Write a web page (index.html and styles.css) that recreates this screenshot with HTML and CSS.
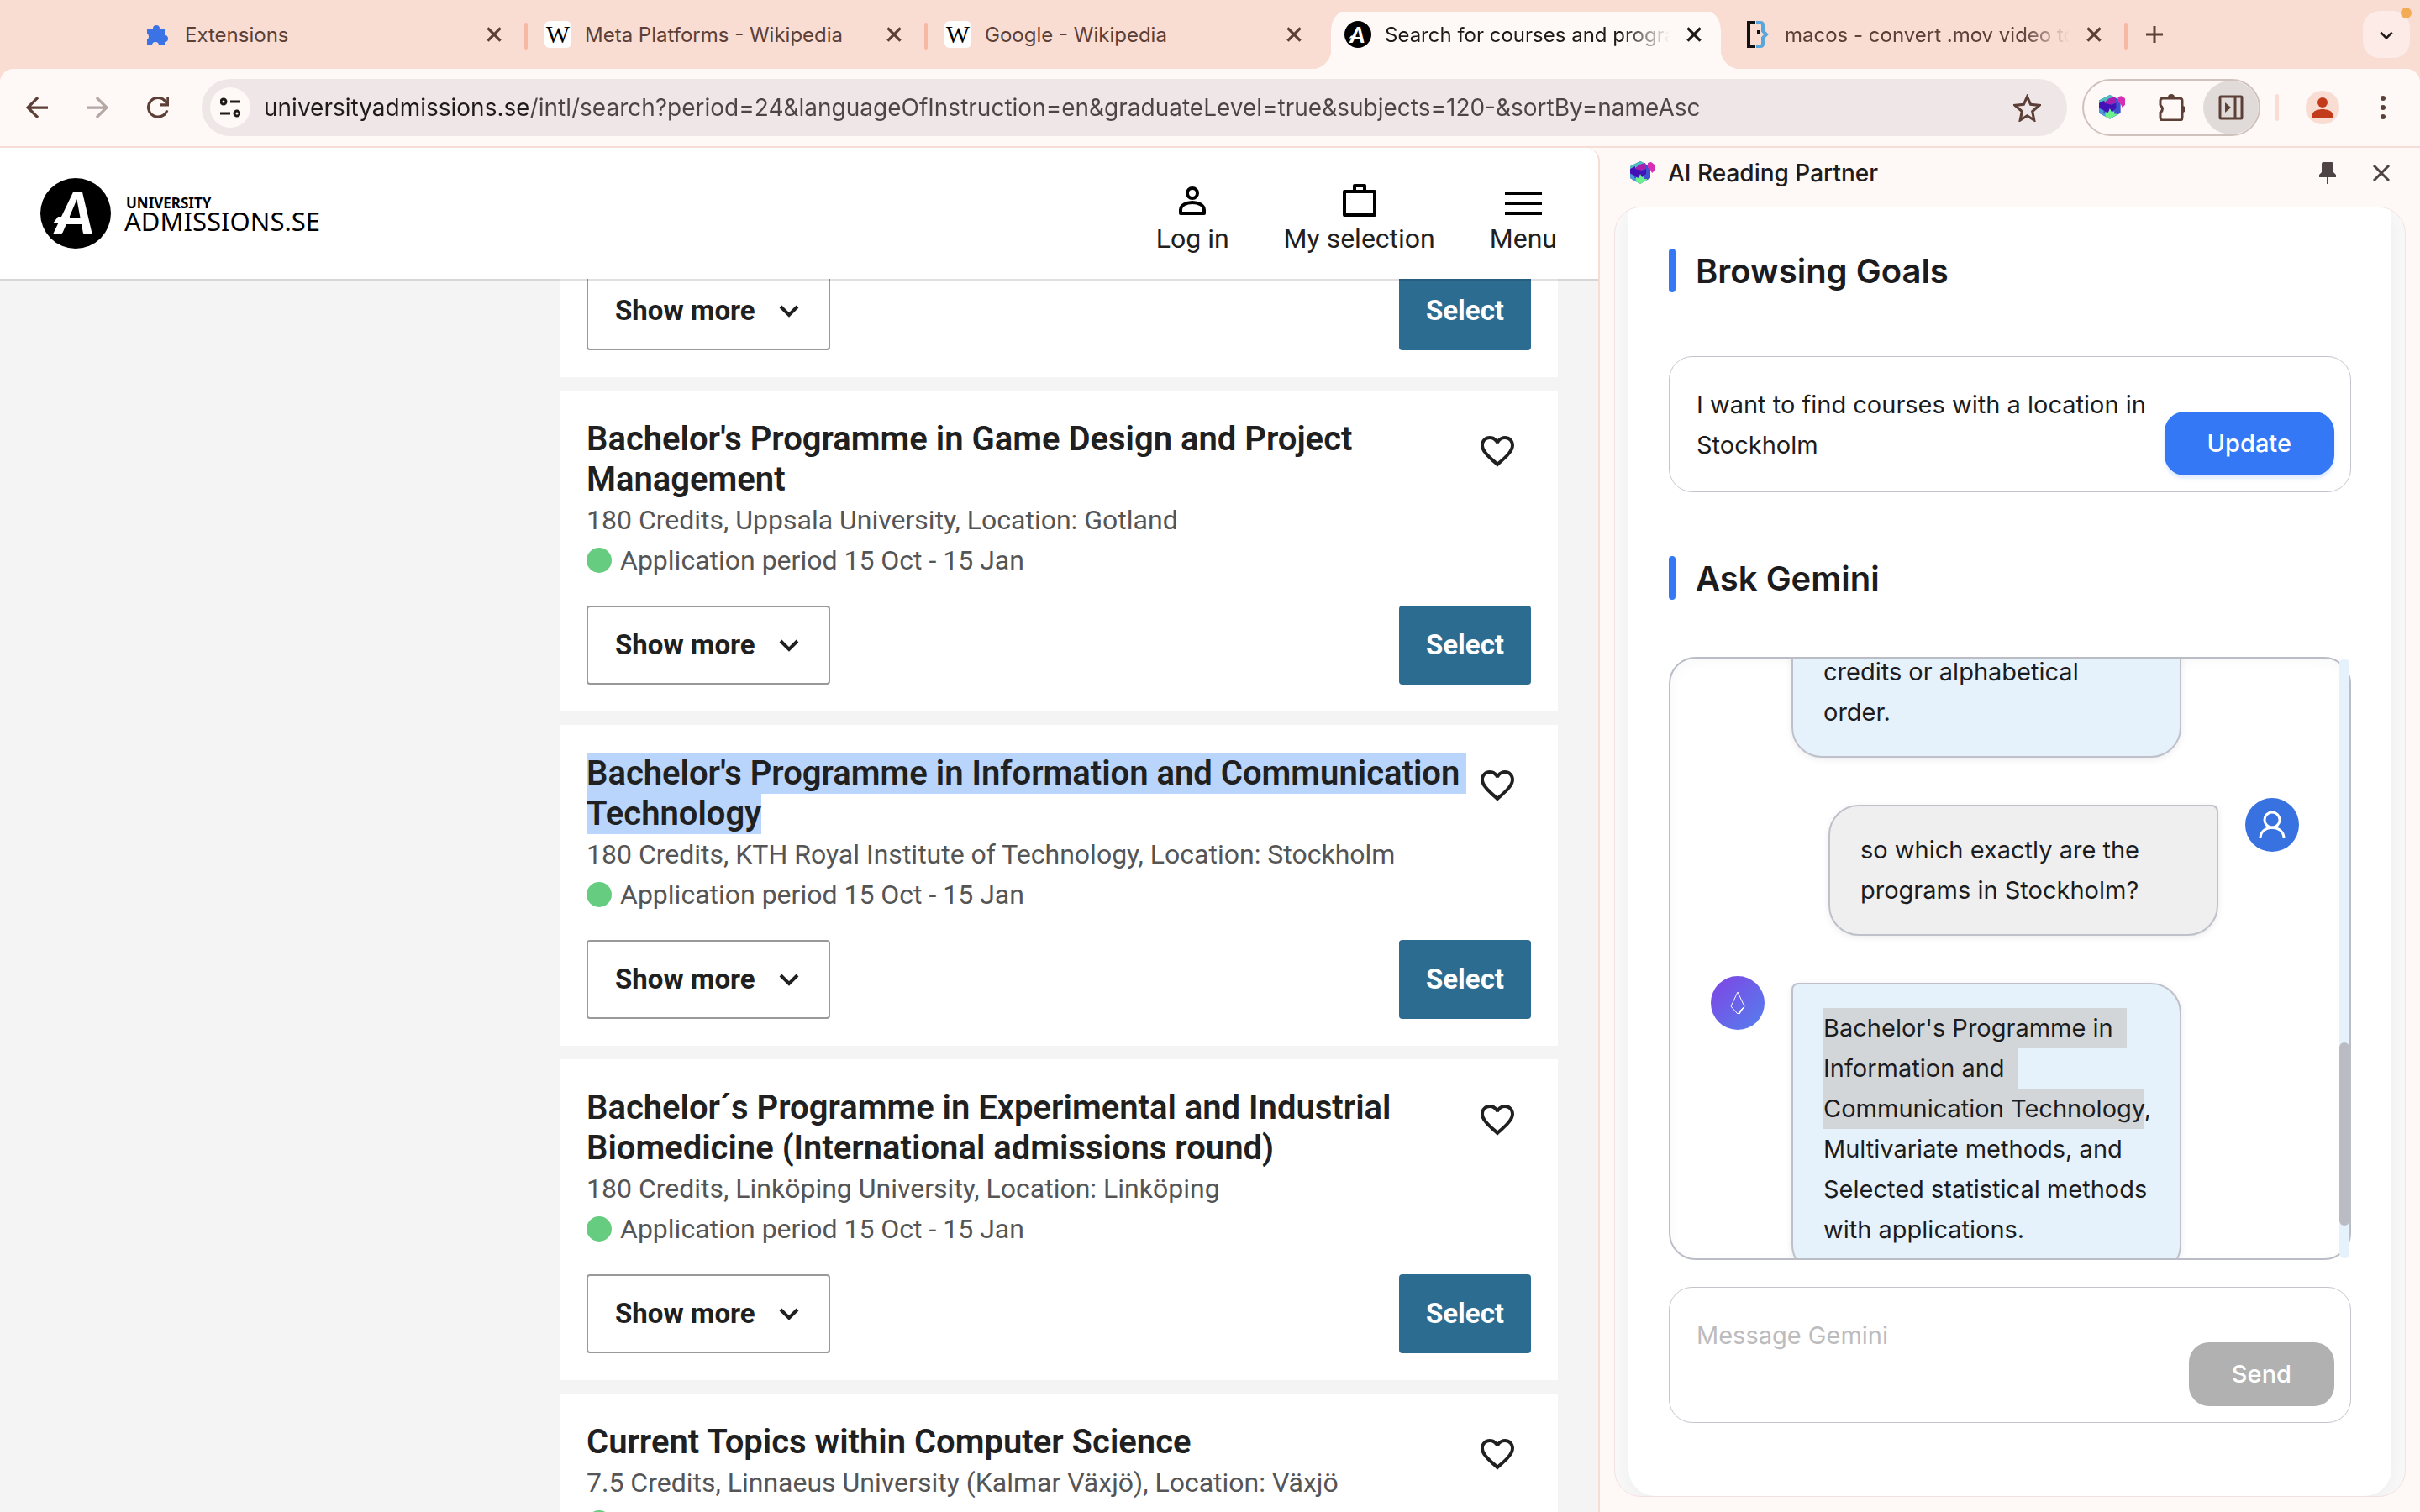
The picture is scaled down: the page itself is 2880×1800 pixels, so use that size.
FILE: index.html
```html
<!DOCTYPE html>
<html lang="en">
<head>
    <meta charset="UTF-8">
    <meta name="viewport" content="width=device-width, initial-scale=1.0">
    <title>Search for courses and programmes</title>
    <link rel="stylesheet" href="styles.css">
</head>
<body>
    <!-- shared icons -->
    <svg class="defs" aria-hidden="true">
        <symbol id="close" viewBox="0 0 24 24"><path d="M5 5l14 14M19 5L5 19" fill="none" stroke="currentColor" stroke-width="3"/></symbol>
        <symbol id="chevron" viewBox="0 0 24 24"><path d="M2 7l10 10L22 7" fill="none" stroke="currentColor" stroke-width="4"/></symbol>
        <symbol id="heart" viewBox="0 0 24 24"><path d="M12 21.35l-1.45-1.32C5.4 15.36 2 12.28 2 8.5 2 5.42 4.42 3 7.5 3c1.74 0 3.41.81 4.5 2.09C13.09 3.81 14.76 3 16.5 3 19.58 3 22 5.42 22 8.5c0 3.78-3.4 6.86-8.55 11.54L12 21.35zM12.1 18.55C17.14 14.24 20 11.39 20 8.5c0-2-1.5-3.5-3.5-3.5-1.54 0-3.04.99-3.57 2.36h-1.87C10.54 5.99 9.04 5 7.5 5 5.5 5 4 6.5 4 8.5c0 2.89 3.14 5.74 8.1 10.05z" fill="currentColor" fill-rule="evenodd"/></symbol>
        <symbol id="cube" viewBox="0 0 30 30">
            <path d="M13 1L25 7v14l-12 7-12-7V7z" fill="#3f51cf"/>
            <path d="M1 7L13 1l7 3-5 3-4-1-3 3-7 2z" fill="#4cc0c0"/>
            <path d="M12 5l7-2v7l-6 2-7-2z" fill="#a81fb0"/>
            <path d="M1 10l6-3v3l8 2 5-2v6l-4 3-7 1-8-5z" fill="#4312b6"/>
            <path d="M1 16l5 2v3h4v5l-9-5z" fill="#4b9bd8"/>
            <path d="M8 20l3 1 2-5 2 4 3-1v3h3v1l-8 5-5-3z" fill="#6df28b"/>
            <path d="M22 3l4-1 4 3v7l-3 3-2-4-3-2z" fill="#d52fb4"/>
        </symbol>
        <symbol id="ua" viewBox="0 0 84 84">
            <circle cx="42" cy="42" r="42"/>
            <text x="18" y="67" font-family="Lato, sans-serif" font-size="70" font-weight="900" font-style="italic" fill="#fff">A</text>
            <path d="M21 46h14v8H15z" fill="#fff"/>
        </symbol>
    </svg>

    <div class="tabs">
        <div class="tab">
            <svg class="favicon" viewBox="0 0 32 32"><path d="M3 9h7a4 4 0 1 1 8 0h6v8a4 4 0 1 1 0 8v4h-7a4 4 0 0 0-8 0H3v-7a4 4 0 0 0 0-7z" fill="#3b73e6"/></svg>
            <span class="tab-title">Extensions</span>
            <button class="icon-btn tab-close" aria-label="Close"><svg><use href="#close"/></svg></button>
        </div>
        <div class="tab">
            <span class="favicon wiki">W</span>
            <span class="tab-title">Meta Platforms - Wikipedia</span>
            <button class="icon-btn tab-close" aria-label="Close"><svg><use href="#close"/></svg></button>
        </div>
        <div class="tab before-active">
            <span class="favicon wiki">W</span>
            <span class="tab-title">Google - Wikipedia</span>
            <button class="icon-btn tab-close" aria-label="Close"><svg><use href="#close"/></svg></button>
        </div>
        <div class="tab active">
            <svg class="favicon"><use href="#ua"/></svg>
            <span class="tab-title fade">Search for courses and programmes</span>
            <button class="icon-btn tab-close" aria-label="Close"><svg><use href="#close"/></svg></button>
        </div>
        <div class="tab">
            <svg class="favicon" viewBox="0 0 32 32" fill="none" stroke-width="4"><path d="M13 2H5v28h8" stroke="#111"/><path d="M14 2h5q3 0 3 3v7l4 4-4 4v7q0 3-3 3h-5" stroke="#58a6dc"/><path d="M15 11h4v4h-4z" fill="#111" stroke="none"/></svg>
            <span class="tab-title fade">macos - convert .mov video to mp4</span>
            <button class="icon-btn tab-close" aria-label="Close"><svg><use href="#close"/></svg></button>
        </div>
        <button class="icon-btn new-tab" aria-label="New tab"><svg viewBox="0 0 24 24"><path d="M12 2v20M2 12h20" stroke="currentColor" stroke-width="3"/></svg></button>
        <button class="tab-search" aria-label="Search tabs"><svg><use href="#chevron"/></svg></button>
    </div>

    <div class="toolbar">
        <button class="icon-btn nav-btn" aria-label="Back"><svg viewBox="0 0 24 24" fill="none" stroke="currentColor" stroke-width="3"><path d="M24 12H2M13 1L2 12l11 11"/></svg></button>
        <button class="icon-btn nav-btn disabled" aria-label="Forward"><svg viewBox="0 0 24 24" fill="none" stroke="currentColor" stroke-width="3"><path d="M0 12h22M11 1l11 11-11 11"/></svg></button>
        <button class="icon-btn nav-btn" aria-label="Reload"><svg viewBox="0 0 24 24" fill="none" stroke="currentColor" stroke-width="3"><path d="M22 15a10.500 10.500 0 1 1-2-10l3 4M23 0v9h-9"/></svg></button>
        <div class="omnibox">
            <button class="site-info" aria-label="Site information"><svg viewBox="0 0 24 24" fill="none" stroke="currentColor" stroke-width="3"><circle cx="4" cy="5" r="3"/><path d="M12 5h12M0 19h12"/><circle cx="20" cy="19" r="3"/></svg></button>
            <input class="url" type="text" aria-label="Address" value="universityadmissions.se/intl/search?period=24&amp;languageOfInstruction=en&amp;graduateLevel=true&amp;subjects=120-&amp;sortBy=nameAsc">
            <button class="icon-btn star" aria-label="Bookmark"><svg viewBox="0 0 32 32"><path d="M16 3l4 9 10 1-8 7 2 10-8-5-8 5 2-10-8-7 10-1z" fill="none" stroke="currentColor" stroke-width="3"/></svg></button>
        </div>
        <div class="extensions">
            <button class="icon-btn ext" aria-label="AI Reading Partner"><svg><use href="#cube"/></svg></button>
            <button class="icon-btn ext wide" aria-label="Extensions"><svg viewBox="0 0 32 32"><path d="M3 8q0-3 3-3h20q3 0 3 3v20q0 3-3 3H6q-3 0-3-3v-6q5-4 0-9z" fill="none" stroke="currentColor" stroke-width="3"/><path d="M12 4a4 4 0 0 1 8 0zM29 14a4 4 0 0 1 0 8z" fill="currentColor"/></svg></button>
            <button class="icon-btn ext on" aria-label="Side panel"><svg viewBox="0 0 32 32"><path d="M4 3h24q1 0 1 1v24q0 1-1 1H4q-1 0-1-1V4q0-1 1-1zM21 3v26" fill="none" stroke="currentColor" stroke-width="3"/><path d="M9 10l7 6-7 6z" fill="currentColor"/></svg></button>
        </div>
        <span class="divider"></span>
        <button class="avatar" aria-label="Profile"><svg viewBox="0 0 40 40" fill="#c23c1b"><circle cx="20" cy="14" r="6"/><path d="M8 32v-4c0-4 7-6 12-6s12 2 12 6v4z"/></svg></button>
        <button class="icon-btn more" aria-label="Menu"><svg viewBox="0 0 32 32" fill="currentColor"><circle cx="16" cy="5" r="3"/><circle cx="16" cy="16" r="3"/><circle cx="16" cy="27" r="3"/></svg></button>
    </div>

    <div class="window">
        <div class="page">
            <header class="site-header">
                <a class="logo" href="#">
                    <svg class="logo-mark"><use href="#ua"/></svg>
                    <span class="logo-text"><b>UNIVERSITY</b><span>ADMISSIONS.SE</span></span>
                </a>
                <nav class="site-nav">
                    <a href="#"><svg viewBox="0 0 44 44" fill="none" stroke="currentColor" stroke-width="4"><circle cx="22" cy="14" r="6"/><path d="M8 38v-4c0-6 7-9 14-9s14 3 14 9v4z" stroke-linejoin="round"/></svg>Log in</a>
                    <a href="#"><svg viewBox="0 0 44 44" fill="none" stroke="currentColor" stroke-width="4" stroke-linejoin="round"><path d="M4 12h36v28H4zM16 12V5h12v7"/></svg>My selection</a>
                    <a href="#"><svg viewBox="0 0 44 44" stroke="currentColor" stroke-width="4"><path d="M0 14h44M0 26h44M0 38h44"/></svg>Menu</a>
                </nav>
            </header>
            <main class="results">
                <article class="card cut">
                    <div class="card-actions">
                        <button class="show-more">Show more <svg><use href="#chevron"/></svg></button>
                        <button class="select">Select</button>
                    </div>
                </article>
                <article class="card">
                    <div class="card-head">
                        <h2>Bachelor's Programme in Game Design and Project Management</h2>
                        <button class="icon-btn like" aria-label="Save"><svg><use href="#heart"/></svg></button>
                    </div>
                    <p>180 Credits, Uppsala University, Location: Gotland</p>
                    <p class="period">Application period 15 Oct - 15 Jan</p>
                    <div class="card-actions">
                        <button class="show-more">Show more <svg><use href="#chevron"/></svg></button>
                        <button class="select">Select</button>
                    </div>
                </article>
                <article class="card">
                    <div class="card-head">
                        <h2><mark class="wrapped">Bachelor's Programme in Information and Communication</mark><br><mark>Technology</mark></h2>
                        <button class="icon-btn like" aria-label="Save"><svg><use href="#heart"/></svg></button>
                    </div>
                    <p>180 Credits, KTH Royal Institute of Technology, Location: Stockholm</p>
                    <p class="period">Application period 15 Oct - 15 Jan</p>
                    <div class="card-actions">
                        <button class="show-more">Show more <svg><use href="#chevron"/></svg></button>
                        <button class="select">Select</button>
                    </div>
                </article>
                <article class="card">
                    <div class="card-head">
                        <h2>Bachelor´s Programme in Experimental and Industrial Biomedicine (International admissions round)</h2>
                        <button class="icon-btn like" aria-label="Save"><svg><use href="#heart"/></svg></button>
                    </div>
                    <p>180 Credits, Linköping University, Location: Linköping</p>
                    <p class="period">Application period 15 Oct - 15 Jan</p>
                    <div class="card-actions">
                        <button class="show-more">Show more <svg><use href="#chevron"/></svg></button>
                        <button class="select">Select</button>
                    </div>
                </article>
                <article class="card">
                    <div class="card-head">
                        <h2>Current Topics within Computer Science</h2>
                        <button class="icon-btn like" aria-label="Save"><svg><use href="#heart"/></svg></button>
                    </div>
                    <p>7.5 Credits, Linnaeus University (Kalmar Växjö), Location: Växjö</p>
                    <p class="period"></p>
                </article>
            </main>
        </div>

        <aside class="panel">
            <div class="panel-head">
                <svg class="panel-icon"><use href="#cube"/></svg>
                <span class="panel-title">AI Reading Partner</span>
                <button class="icon-btn" aria-label="Pin"><svg viewBox="0 0 28 28" fill="currentColor"><path d="M9 1h10q2 0 2 2v10l3 3v3H4v-3l3-3V3q0-2 2-2zM13 19h2v8h-2z"/></svg></button>
                <button class="icon-btn" aria-label="Close panel"><svg viewBox="0 0 28 28"><path d="M5 5l18 18M23 5L5 23" stroke="currentColor" stroke-width="3"/></svg></button>
            </div>
            <div class="panel-frame">
                <div class="panel-body">
                    <h2 class="section-title"><label for="goal">Browsing Goals</label></h2>
                    <div class="field">
                        <textarea id="goal">I want to find courses with a location in Stockholm</textarea>
                        <button class="btn">Update</button>
                    </div>
                    <h2 class="section-title"><label for="message">Ask Gemini</label></h2>
                    <div class="chat">
                        <div class="messages">
                            <div class="message continued"><p class="bubble bot">credits or alphabetical<br>order.</p></div>
                            <div class="message mine">
                                <p class="bubble user">so which exactly are the programs in Stockholm?</p>
                                <svg class="face user-face" viewBox="0 0 64 64" fill="none" stroke="#fff" stroke-width="3"><circle cx="32" cy="26" r="9"/><path d="M18 48c0-17 28-17 28 0"/></svg>
                            </div>
                            <div class="message">
                                <svg class="face bot-face" viewBox="0 0 64 64" fill="none" stroke="#fff"><path d="M32 19l8 17-8 9-8-9z"/><path d="M34 42l6-6-6 9z" fill="#fff"/></svg>
                                <p class="bubble bot"><mark class="wrapped">Bachelor's Programme in</mark><br><mark class="wrapped">Information and</mark><br><mark>Communication Technology</mark>, Multivariate methods, and Selected statistical methods with applications.</p>
                            </div>
                        </div>
                        <div class="scrollbar"><div class="thumb"></div></div>
                    </div>
                    <div class="field">
                        <textarea id="message" placeholder="Message Gemini"></textarea>
                        <button class="btn off">Send</button>
                    </div>
                </div>
            </div>
        </aside>
    </div>
</body>
</html>
```
FILE: styles.css
```css
* {
    box-sizing: border-box;
}
body {
    margin: 0;
    height: 100vh;
    display: flex;
    flex-direction: column;
    overflow: hidden;
    background: #f9ddd3;
    color: #202020;
    font-family: Inter, "Liberation Sans", sans-serif;
}
button, input, textarea {
    font: inherit;
    color: inherit;
    border: 0;
    padding: 0;
    background: none;
}
h2, p {
    margin: 0;
}
a {
    color: inherit;
    text-decoration: none;
}
.defs {
    position: absolute;
    width: 0;
    height: 0;
}
.icon-btn {
    display: flex;
    align-items: center;
    justify-content: center;
    flex: none;
}

/* tab strip */
.tabs {
    display: flex;
    align-items: center;
    height: 82px;
    padding: 0 12px 0 150px;
    color: #5c4037;
    font-size: 24px;
}
.tab {
    position: relative;
    display: flex;
    align-items: center;
    flex: 0 1 476px;
    min-width: 0;
    height: 82px;
    padding: 0 25px 0 22px;
}
.tab::after {
    content: "";
    position: absolute;
    right: -2px;
    top: 27px;
    width: 4px;
    height: 32px;
    border-radius: 2px;
    background: #f8b9a4;
}
.tab.active {
    z-index: 1;
    color: #1f1a18;
}
.tab.active::before {
    content: "";
    position: absolute;
    z-index: -1;
    inset: 14px -18px 0 -18px;
    background:
        radial-gradient(circle at 0 0, transparent 24px, #fef8f6 25px) 0 100% / 24px 24px no-repeat,
        radial-gradient(circle at 100% 0, transparent 24px, #fef8f6 25px) 100% 100% / 24px 24px no-repeat,
        linear-gradient(#fef8f6, #fef8f6) 50% 100% / calc(100% - 48px) calc(100% - 20px) no-repeat,
        radial-gradient(circle at 48px 20px, #fef8f6 23px, transparent 24px) 0 0 / 50% 24px no-repeat,
        radial-gradient(circle at calc(100% - 48px) 20px, #fef8f6 23px, transparent 24px) 100% 0 / 50% 24px no-repeat,
        linear-gradient(#fef8f6, #fef8f6) 50% 0 / calc(100% - 96px) 100% no-repeat;
}
.tab.active::after, .before-active::after {
    display: none;
}
.favicon {
    flex: none;
    width: 32px;
    height: 32px;
    margin-right: 16px;
}
.wiki {
    border-radius: 6px;
    background: #fff;
    color: #000;
    font-family: "Liberation Serif", serif;
    font-size: 30px;
    line-height: 32px;
    text-align: center;
}
.tab-title {
    flex: 1;
    min-width: 0;
    overflow: hidden;
    white-space: nowrap;
    margin-right: 16px;
}
.fade {
    -webkit-mask-image: linear-gradient(to left, transparent, #000 56px);
    mask-image: linear-gradient(to left, transparent, #000 56px);
}
.tab-close svg {
    width: 26px;
    height: 26px;
}
.new-tab {
    margin: 0 auto 0 22px;
}
.new-tab svg {
    width: 24px;
    height: 24px;
}
.tab-search {
    position: relative;
    width: 56px;
    height: 56px;
    border-radius: 20px;
    background: #fcebe6;
    color: #1f1a18;
}
.tab-search svg {
    width: 16px;
    height: 16px;
}
.tab-search::after {
    content: "";
    position: absolute;
    top: -4px;
    right: -2px;
    width: 13px;
    height: 13px;
    border-radius: 50%;
    background: #f3ab55;
}

/* toolbar */
.toolbar {
    display: flex;
    align-items: center;
    height: 94px;
    padding: 0 24px 0 8px;
    border-bottom: 2px solid #f6ddd5;
    border-radius: 16px 16px 0 0;
    background: #fef8f6;
    color: #5c4037;
}
.nav-btn {
    width: 72px;
}
.nav-btn svg {
    width: 26px;
    height: 26px;
}
.disabled {
    color: #b3a8a3;
}
.omnibox {
    display: flex;
    align-items: center;
    flex: 1;
    height: 68px;
    margin: 0 18px 0 16px;
    padding: 0 31px 0 10px;
    border-radius: 34px;
    background: #efe6e7;
}
.site-info {
    width: 48px;
    height: 48px;
    margin-right: 16px;
    border-radius: 50%;
    background: #fef8f6;
    color: #1f1a18;
}
.site-info svg {
    display: block;
    width: 24px;
    height: 24px;
    margin: auto;
}
/* host name is darker than the rest of the address */
.url {
    flex: 1;
    min-width: 0;
    height: 40px;
    font-size: 28px;
    color: transparent;
    background: linear-gradient(to right, #1f1a1b 314px, #4e4446 314px);
    -webkit-background-clip: text;
    background-clip: text;
}
.star svg {
    width: 33px;
    height: 33px;
}
.extensions {
    display: flex;
    height: 68px;
    border: 2px solid #cfc2bc;
    border-radius: 34px;
    overflow: hidden;
}
.ext {
    width: 66px;
}
.ext.wide {
    width: 76px;
}
.ext svg {
    width: 32px;
    height: 32px;
}
.ext.on {
    border-radius: 50%;
    background: #e0dbd8;
}
.divider {
    width: 4px;
    height: 32px;
    margin: 0 32px 0 18px;
    border-radius: 2px;
    background: #f9ddd3;
}
.avatar {
    width: 40px;
    height: 40px;
    margin-right: 32px;
    border-radius: 50%;
    background: #f9ddd3;
}
.more {
    width: 40px;
}
.more svg {
    width: 32px;
    height: 32px;
}

.window {
    flex: 1;
    min-height: 0;
    display: flex;
    background: #fef8f6;
}

/* course search page */
.page {
    flex: 1;
    min-width: 0;
    display: flex;
    flex-direction: column;
    overflow: hidden;
    border-right: 2px solid #f6ddd5;
    border-top-right-radius: 16px;
    background: #f4f4f4;
    font-family: Roboto, "Liberation Sans", sans-serif;
    font-size: 32px;
    line-height: 48px;
}
.site-header {
    position: relative;
    z-index: 1;
    flex: none;
    display: flex;
    align-items: center;
    justify-content: space-between;
    height: 156px;
    padding: 0 49px 0 48px;
    background: #fff;
    box-shadow: 0 2px 0 rgba(0, 0, 0, 0.12);
}
.logo {
    display: flex;
    align-items: center;
    gap: 16px;
    color: #000;
    font-family: "Noto Sans", sans-serif;
}
.logo-mark {
    width: 84px;
    height: 84px;
}
.logo-text {
    display: flex;
    flex-direction: column;
    font-size: 31px;
    line-height: 24px;
}
.logo-text b {
    font-size: 17px;
    line-height: 18px;
    padding-left: 2px;
}
.site-nav {
    display: flex;
    gap: 65px;
}
.site-nav a {
    display: flex;
    flex-direction: column;
    align-items: center;
    padding-top: 16px;
}
.site-nav svg {
    width: 44px;
    height: 44px;
    color: #000;
}
.results {
    width: 1188px;
    max-width: 100%;
    margin: -9px 48px 0 auto;
}
.card {
    margin-bottom: 16px;
    padding: 34px 32px 32px;
    background: #fff;
}
.card.cut {
    padding-top: 0;
}
.card-head {
    display: flex;
    align-items: flex-start;
}
.card-head h2 {
    flex: 1;
    min-width: 0;
    font-size: 40px;
    font-weight: 600;
    line-height: 48px;
}
.card p {
    height: 48px;
    color: #555;
}
.like {
    width: 72px;
    height: 76px;
    margin: 0 4px -48px 0;
}
.like svg {
    width: 48px;
    height: 48px;
}
.period {
    display: flex;
    align-items: center;
    gap: 10px;
}
.period::before {
    content: "";
    width: 30px;
    height: 30px;
    border-radius: 50%;
    background: #66cc80;
}
.card-actions {
    display: flex;
    justify-content: space-between;
    margin-top: 30px;
}
.cut .card-actions {
    margin-top: 0;
}
.show-more, .select {
    height: 94px;
    border-radius: 4px;
    font-size: 33px;
    font-weight: 700;
}
.show-more {
    display: flex;
    align-items: center;
    gap: 28px;
    padding: 0 35px 0 32px;
    border: 2px solid #999;
}
.show-more svg {
    width: 24px;
    height: 24px;
}
.select {
    padding: 0 32px;
    background: #2d6c91;
    color: #fff;
}
mark {
    color: inherit;
    background: #b9d5fb;
}
.card-head mark {
    padding: 1px 0;
}
.card-head .wrapped {
    padding-right: 8px;
    white-space: nowrap;
}

/* side panel */
.panel {
    flex: none;
    width: 976px;
    display: flex;
    flex-direction: column;
    padding: 0 17px 18px;
}
.panel-head {
    display: flex;
    align-items: center;
    height: 70px;
    padding: 0 15px 10px 18px;
    color: #4e4446;
    font-size: 28px;
}
.panel-head .icon-btn {
    width: 28px;
    margin-left: 36px;
}
.panel-head .icon-btn svg {
    width: 28px;
    height: 28px;
}
.panel-icon {
    width: 30px;
    height: 30px;
    margin-right: 16px;
}
.panel-title {
    flex: 1;
    color: #1f1a1b;
    font-weight: 500;
}
.panel-frame {
    flex: 1;
    min-height: 0;
    display: flex;
    overflow: hidden;
    padding: 0 16px;
    border: 1px solid #f3e2df;
    border-radius: 32px;
    background: #fafafa;
}
.panel-body {
    flex: 1;
    min-width: 0;
    display: flex;
    flex-direction: column;
    padding: 49px 48px 87px;
    border-radius: 0 0 32px 32px;
    background: #fff;
    box-shadow: 0 8px 32px rgba(0, 0, 0, 0.06);
    color: #1c1c1e;
    font-size: 29px;
    line-height: 48px;
}
.section-title {
    display: flex;
    gap: 24px;
    margin-bottom: 76px;
    font-size: 40px;
    font-weight: 600;
    line-height: 54px;
}
.section-title::before {
    content: "";
    width: 8px;
    height: 52px;
    border-radius: 4px;
    background: #3478f6;
}
.field + .section-title {
    margin: 76px 0 68px;
}
.section-title label {
    height: 52px;
}
.field {
    flex: none;
    display: flex;
    align-items: flex-end;
    gap: 8px;
    padding: 0 19px 19px 32px;
    height: 162px;
    border: 1px solid #c3c5cc;
    border-radius: 28px;
}
.field textarea {
    flex: 1;
    min-width: 0;
    height: 141px;
    padding-top: 33px;
    line-height: 48px;
    resize: none;
    overflow: hidden;
}
.field textarea::placeholder {
    color: #bcbcbe;
}
.btn {
    height: 76px;
    padding: 0 51px;
    border-radius: 24px;
    background: #3478f6;
    box-shadow: 0 4px 4px rgba(52, 120, 246, 0.15);
    color: #fff;
    font-weight: 500;
}
.btn.off {
    background: #b1b1b1;
    box-shadow: none;
}
.chat {
    position: relative;
    flex: 1;
    min-height: 0;
    margin-bottom: 32px;
    border: 2px solid #babdc6;
    border-radius: 32px;
}
.messages {
    height: 100%;
    padding: 0 60px 0 48px;
    overflow: hidden;
    border-radius: 30px;
    box-shadow: inset 0 4px 16px rgba(0, 0, 0, 0.03);
}
.message {
    display: flex;
    gap: 32px;
    margin-bottom: 48px;
}
/* scrolled partly out of view */
.message.continued {
    margin-top: -46px;
    padding-left: 96px;
}
.mine {
    justify-content: flex-end;
}
.bubble {
    width: 464px;
    margin-top: 8px;
    padding: 28px 32px 28px 36px;
    border: 2px solid #bfc1ca;
    box-shadow: 0 2px 8px rgba(0, 0, 0, 0.08);
}
.bubble.bot {
    border-radius: 8px 36px 36px 36px;
    background: #e5f1fb;
}
.bubble.user {
    border-radius: 36px 8px 36px 36px;
    background: #efefef;
}
.bubble mark {
    padding: 6px 0 7px;
    background: #d2d6d9;
}
.bubble .wrapped {
    padding-right: 16px;
}
.face {
    flex: none;
    width: 64px;
    height: 64px;
    border-radius: 50%;
}
.user-face {
    background: #3872e0;
}
.bot-face {
    background: linear-gradient(135deg, #8044e4, #5480ee);
}
.scrollbar {
    position: absolute;
    top: 0;
    right: 0;
    bottom: 0;
    width: 12px;
    border-radius: 6px;
    background: #e5f1fb;
}
.thumb {
    position: absolute;
    top: 64%;
    width: 12px;
    height: 218px;
    border-radius: 6px;
    background: #babcc4;
}
```
